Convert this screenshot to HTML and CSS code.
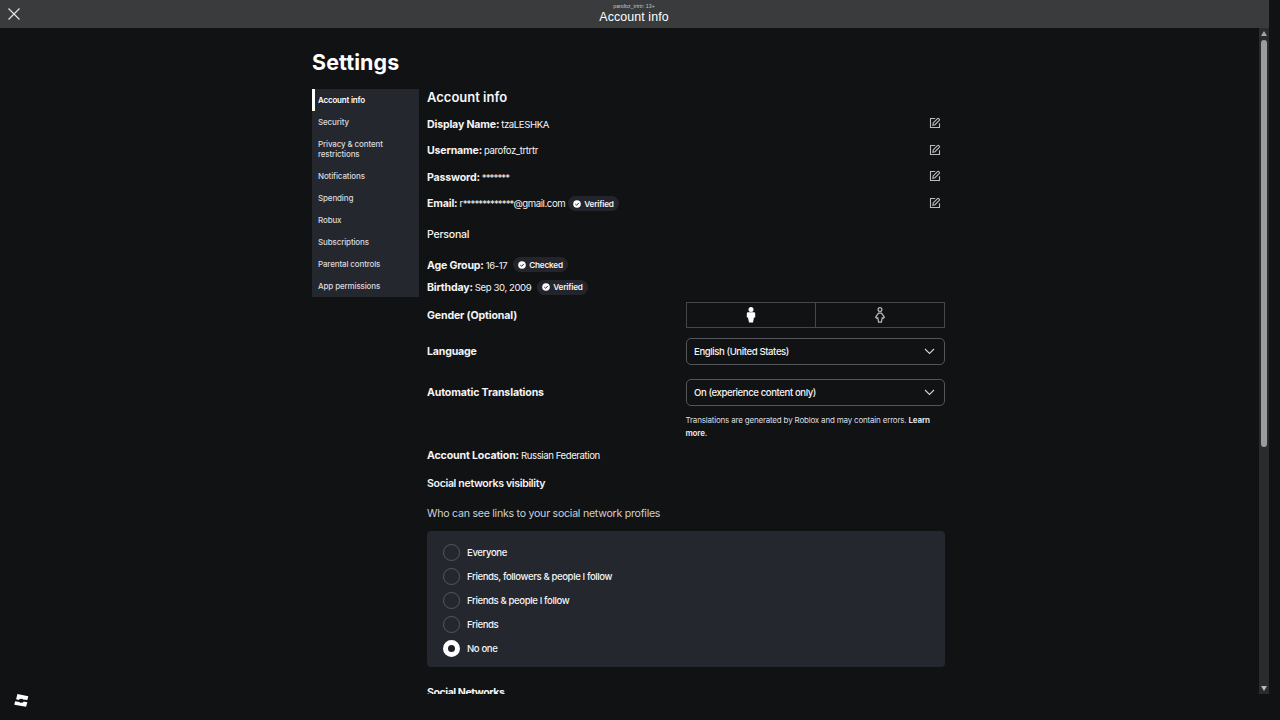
FILE: index.html
```html
<!DOCTYPE html>
<html lang="en">
<head>
<meta charset="utf-8">
<title>Account info</title>
<link rel="stylesheet" href="styles.css">
</head>
<body>
<svg class="defs" width="0" height="0">
  <symbol id="edit" viewBox="0 0 12 12"><path d="M6.2 1.5H1.5v9h9V6.2M4.2 5.9 8.5 1.6c.9-.8 2.7.8 1.8 1.8L6 7.7l-2.1.5z" fill="none" stroke="currentColor" stroke-width="1.1"/></symbol>
  <symbol id="check" viewBox="0 0 8 8"><circle cx="4" cy="4" r="3.8" fill="#fff"/><path d="m2.3 4.1 1.3 1.2 2.2-2.4" fill="none" stroke="#24262d" stroke-width="1"/></symbol>
  <symbol id="chevron" viewBox="0 0 11 7"><path d="m1 1 4.5 4.5L10 1" fill="none" stroke="currentColor" stroke-width="1.1"/></symbol>
</svg>
<header class="topbar">
  <svg class="close" viewBox="0 0 12 12"><path d="m.5.5 11 11m0-11-11 11" stroke="#e4e4e4" stroke-width="1.2"/></svg>
  <div class="titles"><span class="who">parofoz_trtrtr: 13+</span><span class="title">Account info</span></div>
</header>
<div class="viewport">
  <div class="page">
    <h1>Settings</h1>
    <div class="columns">
      <nav class="menu">
        <a class="active">Account info</a>
        <a>Security</a>
        <a>Privacy &amp; content<br>restrictions</a>
        <a>Notifications</a>
        <a>Spending</a>
        <a>Robux</a>
        <a>Subscriptions</a>
        <a>Parental controls</a>
        <a>App permissions</a>
      </nav>
      <main class="main">
        <h2>Account info</h2>
        <div class="row"><b>Display Name:</b><span class="val">tzaLESHKA</span><svg class="edit"><use href="#edit"/></svg></div>
        <div class="row"><b>Username:</b><span class="val">parofoz_trtrtr</span><svg class="edit"><use href="#edit"/></svg></div>
        <div class="row"><b>Password:</b><span class="val stars">*******</span><svg class="edit"><use href="#edit"/></svg></div>
        <div class="row"><b>Email:</b><span class="val email">r<span class="stars">*************</span>@gmail.com</span><span class="badge near"><svg><use href="#check"/></svg>Verified</span><svg class="edit"><use href="#edit"/></svg></div>
        <div class="row personal">Personal</div>
        <div class="row age"><b>Age Group:</b><span class="val">16-17</span><span class="badge"><svg><use href="#check"/></svg>Checked</span></div>
        <div class="row birthday"><b>Birthday:</b><span class="val">Sep 30, 2009</span><span class="badge"><svg><use href="#check"/></svg>Verified</span></div>
        <div class="row gender"><b>Gender (Optional)</b>
          <div class="segments">
            <div><svg viewBox="0 0 10 16"><circle cx="5" cy="2.5" r="2.5" fill="#fff"/><path d="M2 5.2h6q1.2 0 1.2 1.2v4H8L7 15.5H3l-1-5.1H.8v-4q0-1.2 1.2-1.2z" fill="#fff"/></svg></div>
            <div><svg viewBox="0 0 10 16"><g fill="none" stroke="#bcbdc0" stroke-width="1.2"><circle cx="5" cy="2.6" r="1.9"/><path d="M3.5 6.2h3l2.9 4.1-1.1 1.1-1.1-.5-.8 4.2H3.6l-.8-4.2-1.1.5-1.1-1.1z"/></g></svg></div>
          </div>
        </div>
        <div class="row field"><b>Language</b><div class="select"><span>English (United States)</span><svg><use href="#chevron"/></svg></div></div>
        <div class="row field auto"><b>Automatic Translations</b><div class="select"><span>On (experience content only)</span><svg><use href="#chevron"/></svg></div></div>
        <p class="note">Translations are generated by Roblox and may contain errors. <b>Learn<br>more.</b></p>
        <div class="row location"><b>Account Location:</b><span class="val">Russian Federation</span></div>
        <div class="row visibility">Social networks visibility</div>
        <div class="row question">Who can see links to your social network profiles</div>
        <div class="panel">
          <label><i></i><span>Everyone</span></label>
          <label><i></i><span>Friends, followers &amp; people I follow</span></label>
          <label><i></i><span>Friends &amp; people I follow</span></label>
          <label><i></i><span>Friends</span></label>
          <label><i class="on"></i><span>No one</span></label>
        </div>
        <div class="networks">Social Networks</div>
      </main>
    </div>
  </div>
  <div class="scrollbar"><i class="up"></i><i class="thumb"></i><i class="down"></i></div>
</div>
<footer class="footer"><svg viewBox="0 0 15 13"><path d="M3.4 0 14.3 2.3l-.9 3.7-4.6-.5-.4-.7-2.9.3-.5.9-2.9-.7z M1.1 7.3l4.3.6.7.8 3-.3.5-.8 3.8.6-1.3 4.6L.3 10.7z" fill="#fff"/></svg></footer>
</body>
</html>
```

FILE: styles.css
```css
* { box-sizing: border-box; }
body {
  margin: 0; width: 1280px; height: 720px; overflow: hidden;
  background: #111214; color: #f4f4f5;
  font-family: Inter, "Liberation Sans", sans-serif; font-size: 10px;
}
.defs { display: none; }
svg { flex: none; display: block; }
.topbar {
  width: 1269px; height: 28px; background: #393b3d;
  display: grid; grid-template-columns: 28px 1fr 29px; align-items: center;
}
.close { width: 12px; height: 12px; margin-left: 8px; }
.titles {
  display: flex; flex-direction: column; align-items: center;
  font-family: "Liberation Sans", Arial, sans-serif; color: #fff;
}
.who { font-size: 5.2px; line-height: 6px; color: #c6c7c8; }
.title { font-size: 12.4px; line-height: 16px; letter-spacing: .1px; }
.viewport { width: 1269px; height: 666px; overflow: hidden; display: flex; }
.page { width: 632.5px; margin-left: 312px; margin-right: auto; }
h1 { margin: 0; height: 56px; padding-top: 20px; font-size: 21.4px; line-height: 28px; letter-spacing: .12px; font-weight: 700; color: #fff; }
.columns { display: flex; gap: 8px; }
.menu {
  width: 107px; height: 208px; margin-top: 5px; background: #25272e;
  display: flex; flex-direction: column; color: #d9dadd;
}
.menu a {
  padding: 6px 0 6px 3px; border-left: 3px solid transparent;
  font-size: 8px; line-height: 10px; font-weight: 500; letter-spacing: -.14px;
}
.menu .active { border-left-color: #fff; color: #fff; font-weight: 600; letter-spacing: -.2px; }
.main { flex: 1; }
h2 { margin: 0; font-size: 13px; line-height: 26.5px; font-weight: 600; color: #f6f6f7; }
.row { height: 26.6px; display: flex; align-items: center; font-size: 10.6px; letter-spacing: -.25px; white-space: nowrap; }
.row b { font-weight: 700; letter-spacing: -.18px; padding-top: .5px; }
.val { font-size: 9.6px; margin-left: 2px; padding-top: .5px; letter-spacing: -.42px; }
.val.stars, .stars { letter-spacing: -.9px; }
.edit { width: 12px; height: 12px; margin: -1px 4px 0 auto; color: #bbbcbe; }
.badge {
  height: 15px; margin-left: 6px; padding: 0 5px; border-radius: 8px; background: #24252c;
  display: flex; align-items: center; gap: 3px; font-size: 8.2px; font-weight: 600; letter-spacing: -.2px;
}
.badge.near { margin-left: 3px; }
.badge svg { width: 8px; height: 8px; }
.row.personal { height: 34px; padding-top: 1px; font-weight: 500; }
.row.age { height: 28px; }
.row.birthday { height: 17px; }
.row.gender { height: 38px; justify-content: space-between; }
.segments { width: 259px; height: 26px; border: 1px solid #46474c; display: grid; grid-template-columns: 1fr 1fr; }
.segments div { display: grid; place-items: center; }
.segments div + div { border-left: 1px solid #46474c; }
.segments svg { width: 10px; height: 16px; }
.row.gender b, .row.auto b, .location b { padding-top: 1px; letter-spacing: -.15px; }
.row.field { height: 27px; margin-top: 4px; justify-content: space-between; }
.row.auto { margin-top: 14px; }
.select {
  width: 259px; height: 27px; padding: 0 9px 0 7.5px; border: 1px solid #55565b; border-radius: 5px;
  display: flex; align-items: center; justify-content: space-between; font-size: 9.6px; font-weight: 500; letter-spacing: -.41px;
}
.select svg { width: 11px; height: 7px; margin-top: 1px; color: #d0d1d3; }
.note { margin: 8px 0 0 258.5px; font-size: 8px; line-height: 13.5px; letter-spacing: -.19px; white-space: nowrap; color: #dedfe1; }
.row.location, .row.visibility { height: 28px; }
.row.visibility { padding-top: 1px; font-weight: 600; letter-spacing: -.35px; }
.row.question { height: 32px; padding-top: 1px; color: #cfd0d4; }
.panel {
  height: 136px; margin-top: 2px; padding: 9px 16px; background: #25272e; border-radius: 4px;
}
.panel label { height: 24px; display: flex; align-items: center; gap: 7px; font-size: 9.6px; font-weight: 500; letter-spacing: -.4px; }
.panel i { width: 17px; height: 17px; margin-top: 1px; border: 1px solid #55575e; border-radius: 50%; }
.panel span { padding-top: .5px; }
.panel i.on { border: 5px solid #fff; background: #202127; }
.networks { margin-top: 18px; font-size: 10.6px; line-height: 16px; font-weight: 700; letter-spacing: -.47px; }
.scrollbar { width: 10px; background: #2b2b2c; display: flex; flex-direction: column; align-items: center; padding: 3px 0; }
.up { border: 3px solid transparent; border-top: 0; border-bottom: 5px solid #a5a5a5; }
.thumb { width: 6px; height: 407px; margin-top: 4px; border-radius: 3px; background: #9c9c9c; }
.down { margin-top: auto; border: 3px solid transparent; border-bottom: 0; border-top: 5px solid #b8b8b8; }
.footer { height: 26px; padding-left: 14px; }
.footer svg { width: 15px; height: 13px; }
```
